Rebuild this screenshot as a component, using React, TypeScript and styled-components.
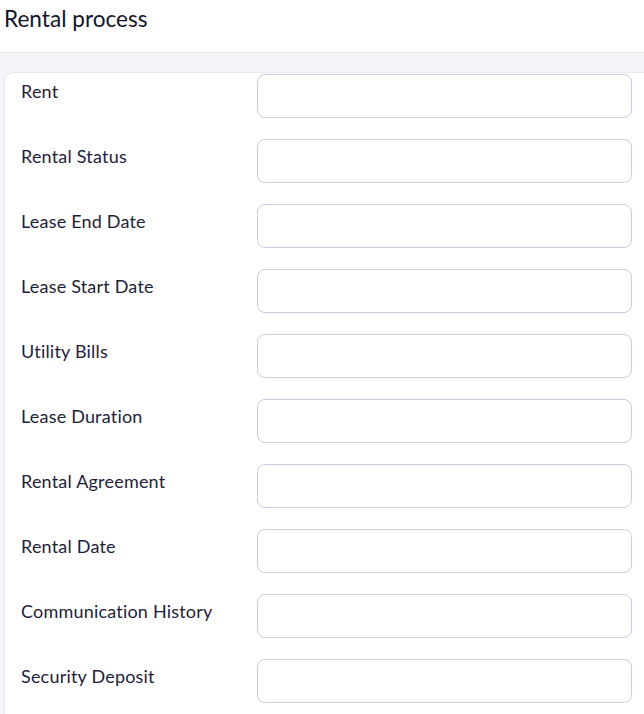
import React from "react";
import styled, { createGlobalStyle } from "styled-components";

const Global = createGlobalStyle`
  html, body { margin: 0; padding: 0; background: #f3f4f7; overflow: hidden; }
  body { font-family: Lato, "Noto Sans", sans-serif; color: #1e1e38; }
`;

const Page = styled.div`
  width: 644px;
  height: 714px;
  overflow: hidden;
  background: #f3f4f7;
`;

const Header = styled.header`
  background: #ffffff;
  border-bottom: 1px solid #e3e5ea;
  padding-left: 4px;
  display: flex;
  align-items: center;
  box-sizing: border-box;
  height: 53px;
  padding-bottom: 16px;
`;

const Title = styled.h1`
  margin: 0;
  font-size: 22.6px;
  font-weight: 400;
  color: #14142b;
`;

const Card = styled.section`
  margin: 19px 0 0 4px;
  width: 700px;
  background: #ffffff;
  border: 1px solid #e6e8ee;
  border-radius: 10px;
  padding: 1px 0 0 16px;
  box-sizing: border-box;
  min-height: 700px;
`;

const Form = styled.div`
  display: grid;
  grid-template-columns: 236px 375px;
  row-gap: 21px;
  align-items: start;
`;

const Label = styled.label`
  font-size: 18px;
  letter-spacing: 0.2px;
  line-height: 20px;
  padding-top: 7px;
  color: #1e1e38;
`;

const Input = styled.input`
  width: 375px;
  height: 44px;
  box-sizing: border-box;
  border: 1px solid #cdcbdc;
  border-radius: 8px;
  background: #fff;
  font-family: inherit;
  font-size: 16px;
  padding: 0 12px;
  outline: none;
`;

const fields = [
  "Rent",
  "Rental Status",
  "Lease End Date",
  "Lease Start Date",
  "Utility Bills",
  "Lease Duration",
  "Rental Agreement",
  "Rental Date",
  "Communication History",
  "Security Deposit",
];

export default function App() {
  return (
    <Page>
      <Global />
      <Header>
        <Title>Rental process</Title>
      </Header>
      <Card>
        <Form>
          {fields.map((f) => (
            <React.Fragment key={f}>
              <Label>{f}</Label>
              <Input type="text" aria-label={f} />
            </React.Fragment>
          ))}
        </Form>
      </Card>
    </Page>
  );
}
